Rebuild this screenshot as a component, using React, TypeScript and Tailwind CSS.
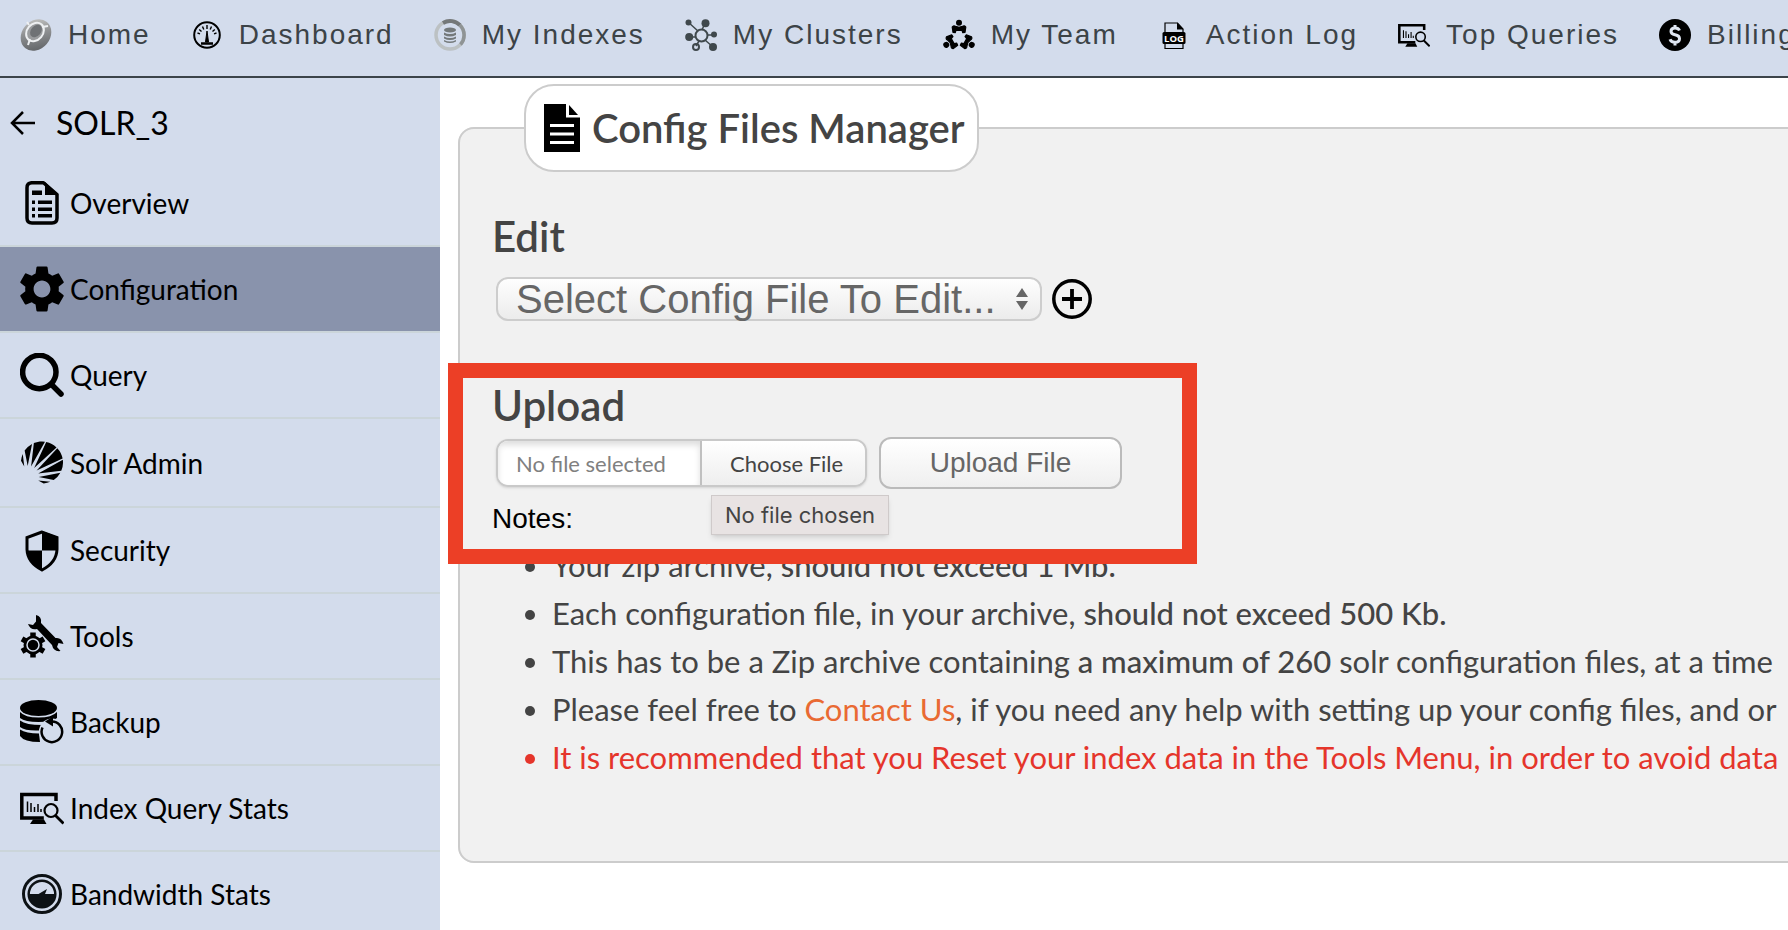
import { ReactNode } from 'react';
import { SiApachesolr } from 'react-icons/si';
import { MdSettings } from 'react-icons/md';

interface LinkItem {
  label: string;
  icon: ReactNode;
  active?: boolean;
}

function HomeIcon() {
  return (
    <svg viewBox="0 0 32 32" className="size-8">
      <defs>
        <linearGradient id="home-shell" x1="1" y1="0" x2="0" y2="1">
          <stop offset="0" stopColor="#d3d3d0" />
          <stop offset="0.45" stopColor="#8e9092" />
          <stop offset="1" stopColor="#55585b" />
        </linearGradient>
      </defs>
      <ellipse cx="16" cy="16" rx="17" ry="14" transform="rotate(-50 16 16)" fill="url(#home-shell)" />
      <ellipse cx="15" cy="13" rx="10" ry="8" transform="rotate(-50 15 13)" fill="#9a9c9e" stroke="#eef0f2" strokeWidth="2" />
      <ellipse cx="16" cy="12" rx="7" ry="5" transform="rotate(-50 16 12)" fill="#6f7275" />
      <path d="M10 20l-2 6M22 8l6-1M9 6L7 3" stroke="#eef0f2" strokeWidth="2" />
    </svg>
  );
}

function DashboardIcon() {
  return (
    <svg viewBox="0 0 32 32" className="size-8" fill="none" stroke="#000">
      <circle cx="16" cy="16" r="12.8" strokeWidth="2" />
      <path d="M16 6v4M11.500 7.500l1.300 3M20.500 7.500l-1.300 3M8.200 10.500l2.300 2M23.800 10.500l-2.300 2M6.500 14l2.500.8M25.500 14l-2.500.8" strokeWidth="1.400" />
      <path d="M16 12l1.500 11h-3z" fill="#000" strokeWidth="1" />
      <path d="M10 24.500h12" strokeWidth="2.500" />
    </svg>
  );
}

function IndexesIcon() {
  return (
    <svg viewBox="0 0 32 32" className="size-8" fill="none">
      <circle cx="16" cy="16" r="14" stroke="#bcc1c3" strokeWidth="3.500" />
      <path d="M9 3.900A14 14 0 0 1 26 6.200" stroke="#747879" strokeWidth="4" />
      <path d="M26 6.200A14 14 0 0 1 26.500 25.500" stroke="#8f9495" strokeWidth="3.500" />
      <g fill="#74797a">
        <ellipse cx="16" cy="11" rx="6" ry="2.500" />
        <path d="M10 13.500q6 3 12 0v2.500q-6 3-12 0zM10 17.500q6 3 12 0v2q-6 3-12 0zM10 21q6 3 12 0v1.500q-6 3-12 0z" />
      </g>
    </svg>
  );
}

function ClustersIcon() {
  return (
    <svg viewBox="0 0 32 32" className="size-8" stroke="#3f484c">
      <path d="M3 3l10 9M20 4l-3 7M4 18h7M29 16h-6M20 21l8 7M14 22l-3 5" strokeWidth="1.500" />
      <circle cx="16.500" cy="16.500" r="6" fill="none" strokeWidth="2" />
      <circle cx="11" cy="28" r="3" fill="none" strokeWidth="2" />
      <g fill="#3f484c" stroke="none">
        <circle cx="3.500" cy="3.500" r="3" />
        <circle cx="20.500" cy="4.200" r="4" />
        <circle cx="4.200" cy="18" r="4" />
        <circle cx="29" cy="15.500" r="3" />
        <circle cx="28" cy="28" r="4" />
      </g>
    </svg>
  );
}

function TeamIcon() {
  return (
    <svg viewBox="0 0 32 32" className="size-8 overflow-visible">
      <defs>
        <g id="team-member">
          <circle cx="16" cy="3.800" r="3" />
          <path d="M10 13.500l-.8-5.500q1.300-2 3.300-.7l3.500 1 3.500-1q2-1.300 3.300.7l-.8 5.500-2.200.2-.8-2.400h-6l-.8 2.400z" stroke="#000" strokeWidth="1.200" strokeLinejoin="round" />
        </g>
      </defs>
      <use href="#team-member" />
      <use href="#team-member" transform="rotate(120 16 18.500)" />
      <use href="#team-member" transform="rotate(240 16 18.500)" />
    </svg>
  );
}

function LogIcon() {
  return (
    <svg viewBox="0 0 32 32" className="size-8 tracking-normal">
      <path d="M7 29.500V4h12.500l5.500 6v19.500z" fill="none" stroke="#000" strokeWidth="1.200" />
      <path d="M19 3.500l6.500 7H19z" />
      <rect x="4.500" y="13" width="23" height="12" rx="1.500" />
      <text x="16" y="22.500" textAnchor="middle" fontSize="9.500" fontWeight="700" fill="#fff" className="font-['Open_Sans',sans-serif]">LOG</text>
    </svg>
  );
}

function QueryStatsIcon({ className }: { className: string }) {
  return (
    <svg viewBox="0 0 44 44" className={className} fill="none" stroke="#000">
      <path d="M36 15V8.500H1.800v23.500h22" strokeWidth="3.500" />
      <path d="M7.500 26V15.500M11 26v-9M14.500 26v-5M18 26v-8M21 26v-3" strokeWidth="1.500" />
      <path d="M13 33.500h11l2.500 4.500H10z" fill="#000" stroke="none" />
      <circle cx="31" cy="24.500" r="6.500" strokeWidth="2.200" />
      <path d="M35.500 29.500l8 8" strokeWidth="2.800" />
    </svg>
  );
}

function BillingIcon() {
  return (
    <svg viewBox="0 0 32 32" className="size-8">
      <circle cx="16" cy="16" r="16" />
      <path d="M20.500 11.500q-1-2.500-4.500-2.500-4 0-4 3.300 0 2.700 4 3.500 4.500.8 4.500 4 0 3.500-4.500 3.500-4 0-5-3M16 6v3M16 23v3.500" fill="none" stroke="#dfe6f2" strokeWidth="3" />
    </svg>
  );
}

function OverviewIcon() {
  return (
    <svg viewBox="0 0 44 44" className="size-11">
      <path d="M11 1.800h12.500L37 13.500V37q0 5-5 5H12q-5 0-5-5V6.800q0-5 5-5z" fill="none" stroke="#000" strokeWidth="3.500" strokeLinejoin="round" />
      <path d="M25 1l13.500 13H25z" />
      <path d="M12 9.500h10v4.500H12zM12 19.500h3v3.500h-3zM18 19.500h14v3.500H18zM12 26.500h3v3.500h-3zM18 26.500h14v3.500H18zM12 33h3v3.500h-3zM18 33h14v3.500H18z" />
    </svg>
  );
}

function SearchIcon() {
  return (
    <svg viewBox="0 0 44 44" className="size-11" fill="none" stroke="#000" strokeLinecap="round">
      <circle cx="19.300" cy="19" r="16.700" strokeWidth="5.500" />
      <path d="M32 32l9 9" strokeWidth="5.500" />
    </svg>
  );
}

function SecurityIcon() {
  return (
    <svg viewBox="0 0 44 44" className="size-11">
      <path d="M22 4L7 9.500v12Q7.500 34.500 22 42q14.500-7.500 15-20.500v-12z" fill="none" stroke="#000" strokeWidth="3" />
      <path d="M22 3l16 6v13.500H22V42.500Q9 36 6.500 22.500H22z" />
    </svg>
  );
}

function ToolsIcon() {
  return (
    <svg viewBox="0 0 44 44" className="size-11">
      <path d="M16 1q6 1.500 5 8l14.500 15q6-1 8 6l-5-1-1.500 4 3.500 4q-7 1-8.500-6L17 15q-6.500 1.500-9-5l5 1 3-3.500z" />
      <g stroke="#000" strokeWidth="5.500">
        <path d="M13 18.500v25M2 24.800l22 12.500M24 24.800L2 37.300" />
      </g>
      <circle cx="13" cy="31" r="9.500" />
      <circle cx="13" cy="31" r="6" fill="none" stroke="#d3dcec" strokeWidth="1.500" />
    </svg>
  );
}

function BackupIcon() {
  return (
    <svg viewBox="0 0 44 44" className="size-11">
      <ellipse cx="18.500" cy="8" rx="18.500" ry="8" />
      <path d="M0 12q5 5.500 18.500 5.500T37 12v6q-5 4-18.500 4T0 18zM0 20.500Q6 25 22 25l-3 5.500Q5 31 0 27zM0 29.500q6 4 19 4l1 8.500Q4 42 0 36z" />
      <circle cx="32" cy="31.500" r="13" fill="#d3dcec" />
      <path d="M32 21.500a10.300 10.300 0 1 1-9.500 6" fill="none" stroke="#000" strokeWidth="2.500" />
      <path d="M25 21.500l8-5v10z" />
    </svg>
  );
}

function BandwidthIcon() {
  return (
    <svg viewBox="0 0 44 44" className="size-11" fill="#0d1215">
      <circle cx="22" cy="22" r="18.500" fill="none" stroke="#0d1215" strokeWidth="3" />
      <circle cx="22" cy="22" r="13.300" fill="none" stroke="#0d1215" strokeWidth="2.500" />
      <path d="M8.500 22h10l8.500-5-2 5h10.500a13.500 13.500 0 0 1-27 0z" />
    </svg>
  );
}

const navItems: LinkItem[] = [
  { label: 'Home', icon: <HomeIcon /> },
  { label: 'Dashboard', icon: <DashboardIcon /> },
  { label: 'My Indexes', icon: <IndexesIcon /> },
  { label: 'My Clusters', icon: <ClustersIcon /> },
  { label: 'My Team', icon: <TeamIcon /> },
  { label: 'Action Log', icon: <LogIcon /> },
  { label: 'Top Queries', icon: <QueryStatsIcon className="size-8" /> },
  { label: 'Billing', icon: <BillingIcon /> },
];

const menuItems: LinkItem[] = [
  { label: 'Overview', icon: <OverviewIcon /> },
  { label: 'Configuration', icon: <MdSettings className="-m-[6px] size-14 shrink-0" />, active: true },
  { label: 'Query', icon: <SearchIcon /> },
  { label: 'Solr Admin', icon: <SiApachesolr className="h-[47px] w-[42px]" /> },
  { label: 'Security', icon: <SecurityIcon /> },
  { label: 'Tools', icon: <ToolsIcon /> },
  { label: 'Backup', icon: <BackupIcon /> },
  { label: 'Index Query Stats', icon: <QueryStatsIcon className="size-11" /> },
  { label: 'Bandwidth Stats', icon: <BandwidthIcon /> },
];

function TopNav() {
  return (
    <nav className="flex h-[78px] items-center gap-10 overflow-hidden border-b-2 border-[#3c444a] bg-[#d3dcec] px-5 pb-[6px]">
      {navItems.map((item) => (
        <a
          key={item.label}
          href="#"
          className="flex h-8 shrink-0 items-center gap-4 font-['Liberation_Sans',sans-serif] text-[28px] tracking-[2px] text-[#3c4347]"
        >
          {item.icon}
          {item.label}
        </a>
      ))}
    </nav>
  );
}

function Sidebar() {
  return (
    <aside className="w-[440px] shrink-0 bg-[#d3dcec] text-black">
      <a href="#" className="flex h-[83px] items-center gap-5 pt-[6px] pl-[10px] text-[32px]">
        <svg viewBox="0 0 26 26" className="size-[26px]" fill="none" stroke="#000" strokeWidth="2.500">
          <path d="M25 13H2M13 2L2 13l11 11" />
        </svg>
        SOLR_3
      </a>
      <ul>
        {menuItems.map((item) => (
          <li key={item.label} className={`border-b-2 border-[#cbd5da] ${item.active ? 'bg-[#8993ac]' : ''}`}>
            <a href="#" className="flex items-center gap-[6px] py-5 pl-5 text-[28px] leading-9">
              <span className="flex w-11 justify-center">{item.icon}</span>
              {item.label}
            </a>
          </li>
        ))}
      </ul>
    </aside>
  );
}

function EditSection() {
  return (
    <section className="pt-9">
      <h2 className="text-[42px] leading-[56px] font-semibold">Edit</h2>
      <div className="flex items-center gap-[10px] pt-[13px] pl-1">
        <div className="relative">
          <select
            aria-label="Config file"
            className="block h-11 w-[546px] appearance-none rounded-xl bg-linear-to-b from-white to-[#ebebeb] pl-5 font-['Liberation_Sans',sans-serif] text-[40px] leading-11 text-[#666] inset-ring-2 inset-ring-[#cdcdcd]"
          >
            <option>Select Config File To Edit...</option>
          </select>
          <svg viewBox="0 0 12 22" className="pointer-events-none absolute top-[11px] right-[14px] h-[22px] w-3" fill="#666">
            <path d="M6 0l6 9H0zM6 22l6-9H0z" />
          </svg>
        </div>
        <button type="button" aria-label="Add config file">
          <svg viewBox="0 0 40 40" className="size-10" fill="none" stroke="#000" strokeWidth="3.500">
            <circle cx="20" cy="20" r="18.200" />
            <path d="M10 20h20M20 10v20" strokeWidth="3.800" />
          </svg>
        </button>
      </div>
    </section>
  );
}

function UploadSection() {
  return (
    <section className="relative -mx-11 mt-[42px] h-[201px] w-[749px] pt-[14px] pl-11">
      <div className="pointer-events-none absolute inset-0 z-10 border-[15px] border-[#ec3f26]" />
      <h2 className="text-[42px] leading-[56px] font-semibold">Upload</h2>
      <div className="mt-1 flex items-center gap-3 pl-1">
        <label className="relative flex h-12 w-[371px] overflow-hidden rounded-xl border-2 border-[#c9c9c9] text-[22px] leading-[46px] shadow-sm">
          <input type="file" className="absolute inset-0 opacity-0" />
          <span className="w-[204px] border-r-2 border-[#c0c0c0] bg-white pl-[18px] text-[#808080] shadow-[inset_0_4px_6px_#ddd]">
            No file selected
          </span>
          <span className="flex-1 bg-linear-to-b from-white to-[#eee] pl-7 text-[#444]">Choose File</span>
        </label>
        <button
          type="button"
          className="h-[52px] w-[243px] rounded-xl border-2 border-[#bbb] bg-linear-to-b from-white to-[#efefef] font-['Liberation_Sans',sans-serif] text-[28px] text-[#666]"
        >
          Upload File
        </button>
      </div>
      <div className="flex items-start font-['Liberation_Sans',sans-serif]">
        <p className="w-[219px] pt-3 text-[28px] leading-9 text-black">Notes:</p>
        <div role="tooltip" className="mt-[6px] border border-[#cfcaca] bg-[#e8e3e3] px-[13px] font-[Inter,sans-serif] text-[22px] leading-[38px] shadow-md">
          No file chosen
        </div>
      </div>
    </section>
  );
}

function NotesList() {
  return (
    <ul className="-mt-[23px] ml-[60px] list-disc text-[31px] leading-[48px] whitespace-nowrap">
      <li>
        Your zip archive, <b className="font-medium">should not exceed 1 Mb.</b>
      </li>
      <li>
        Each configuration file, in your archive, <b className="font-medium">should not exceed 500 Kb.</b>
      </li>
      <li>
        This has to be a Zip archive containing <b className="font-medium">a maximum of 260</b> solr configuration files, at a time
      </li>
      <li>
        Please feel free to <a href="#" className="text-[#e96a33]">Contact Us</a>, if you need any help with setting up your config files, and or
      </li>
      <li className="text-[#e5352b]">
        It is recommended that you Reset your index data in the Tools Menu, in order to avoid data
      </li>
    </ul>
  );
}

export default function App() {
  return (
    <div className="h-screen overflow-hidden bg-white font-[Lato,sans-serif] text-[#444]">
      <TopNav />
      <div className="flex">
        <Sidebar />
        <main className="min-w-0 flex-1 pt-[6px] pl-[18px]">
          {/* The panel runs past the right edge of the window */}
          <fieldset className="-mr-8 min-w-0 rounded-2xl border-2 border-[#ccc] bg-[#f1f1f1] pb-20 pl-8">
            <legend className="ml-8 flex h-[88px] items-center gap-3 rounded-[30px] border-2 border-[#ccc] bg-white pr-3 pl-[18px] text-[40px] font-semibold">
              <svg viewBox="0 0 36 48" className="h-12 w-9">
                <path d="M0 0h22v13.500h14V48H0z" />
                <path d="M25 1l9 10h-9z" />
                <path d="M6 21.500h24M6 30h24M6 38.500h24" stroke="#fff" strokeWidth="3" />
              </svg>
              Config Files Manager
            </legend>
            <EditSection />
            <UploadSection />
            <NotesList />
          </fieldset>
        </main>
      </div>
    </div>
  );
}
